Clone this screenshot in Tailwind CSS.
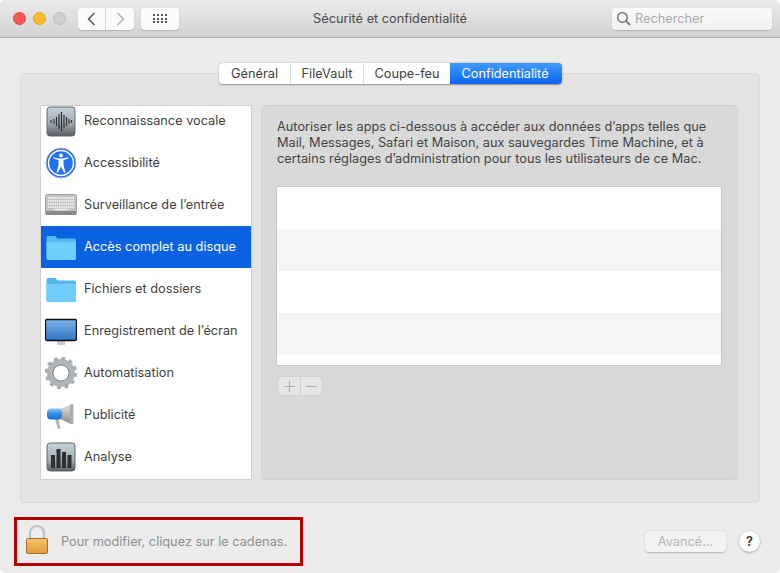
<!DOCTYPE html>
<html lang="fr">
  <head>
    <meta charset="UTF-8" />
    <title>Sécurité et confidentialité</title>
    <script src="https://cdn.jsdelivr.net/npm/@tailwindcss/browser@4"></script>
  </head>
  <body class="bg-white">
    <div class="w-[780px] h-[573px] bg-[#ececec] rounded-[5px] overflow-hidden font-['Inter','Liberation_Sans',sans-serif] text-[12.75px] text-[#3f3f3f]">
      <!-- title bar -->
      <div class="h-[38px] bg-gradient-to-b from-[#ebebeb] to-[#d2d2d2] border-b border-[#b4b4b4] flex items-center pl-[12px] pr-[8px]">
        <div class="flex gap-[7px] w-[66px] shrink-0 pl-[1px]">
          <span class="w-[13px] h-[13px] rounded-full bg-[#fc5753] border border-[#e0443e]"></span>
          <span class="w-[13px] h-[13px] rounded-full bg-[#fdbc2e] border border-[#dea123]"></span>
          <span class="w-[13px] h-[13px] rounded-full bg-[#cfcfcf] border border-[#bdbdbd]"></span>
        </div>
        <div class="flex h-[22px] w-[56px] shrink-0 rounded-[4px] bg-[#fbfbfb] shadow-[0_1px_1px_#b0b0b0]">
          <div class="w-[28px] border-r border-[#d6d6d6] flex items-center justify-center">
            <svg width="9" height="14" viewBox="0 0 9 14" fill="none" stroke="#555" stroke-width="1.5"><path d="M7.5 1 1.5 7l6 6" /></svg>
          </div>
          <div class="w-[28px] flex items-center justify-center">
            <svg width="9" height="14" viewBox="0 0 9 14" fill="none" stroke="#b0b0b0" stroke-width="1.5"><path d="M1.5 1l6 6-6 6" /></svg>
          </div>
        </div>
        <div class="ml-[7px] w-[38px] h-[22px] shrink-0 rounded-[4px] bg-[#fbfbfb] shadow-[0_1px_1px_#b0b0b0] flex items-center justify-center">
          <div class="grid grid-cols-4 gap-x-[2px] gap-y-[1.5px]">
            <i class="w-[2px] h-[2px] bg-[#555]"></i><i class="w-[2px] h-[2px] bg-[#555]"></i><i class="w-[2px] h-[2px] bg-[#555]"></i><i class="w-[2px] h-[2px] bg-[#555]"></i>
            <i class="w-[2px] h-[2px] bg-[#555]"></i><i class="w-[2px] h-[2px] bg-[#555]"></i><i class="w-[2px] h-[2px] bg-[#555]"></i><i class="w-[2px] h-[2px] bg-[#555]"></i>
            <i class="w-[2px] h-[2px] bg-[#555]"></i><i class="w-[2px] h-[2px] bg-[#555]"></i><i class="w-[2px] h-[2px] bg-[#555]"></i><i class="w-[2px] h-[2px] bg-[#555]"></i>
          </div>
        </div>
        <div class="flex-1 text-center text-[#4b4b4b] pr-[11px] pt-[1px]">Sécurité et confidentialité</div>
        <div class="w-[160px] h-[22px] shrink-0 rounded-[4px] bg-gradient-to-b from-[#fbfbfb] to-[#f1f1f1] shadow-[0_1px_1px_#b0b0b0] flex items-center pl-[4px] gap-[4px] text-[#a9a9a9]">
          <svg width="15" height="15" viewBox="0 0 14 14" fill="none" stroke="#666" stroke-width="1.2"><circle cx="6" cy="6" r="4.5" /><path d="M9.3 9.3 13 13" stroke-width="1.5" /></svg>
          <span>Rechercher</span>
        </div>
      </div>

      <!-- main -->
      <div class="px-[20px] pt-[25px]">
        <div class="flex justify-center relative z-10 -mb-[11px] pl-[1px]">
          <div class="flex h-[21px] rounded-[4px] bg-white shadow-[0_0.5px_1.5px_#8e8e8e] overflow-hidden">
            <div class="w-[72px] flex items-center justify-center border-r border-[#dedede]">Général</div>
            <div class="w-[73px] flex items-center justify-center border-r border-[#dedede]">FileVault</div>
            <div class="w-[86px] flex items-center justify-center">Coupe-feu</div>
            <div class="w-[112px] flex items-center justify-center text-white bg-gradient-to-b from-[#3f9bfb] to-[#0f63f5] pr-[2px]">Confidentialité</div>
          </div>
        </div>
        <div class="h-[430px] bg-[#e3e3e3] border border-[#dcdcdc] rounded-[4px] pl-[19px] pr-[21px] pt-[31px] flex gap-[9px]">
          <!-- category list -->
          <div class="w-[212px] h-[375px] bg-white border border-[#cfcfcf] overflow-hidden shrink-0">
            <div class="-mt-[6px]">
              <div class="h-[42px] flex items-center gap-[7px] pl-[4px]">
                <svg class="w-[32px] shrink-0" width="32" height="32" viewBox="0 0 32 32">
                  <defs><linearGradient id="g1" x1="0" y1="0" x2="0" y2="1"><stop offset="0" stop-color="#c4d0d8" /><stop offset="0.55" stop-color="#a4aeb4" /><stop offset="1" stop-color="#555b60" /></linearGradient></defs>
                  <rect x="2" y="2" width="28" height="29" rx="3" fill="url(#g1)" stroke="#5f6a72" />
                  <path d="M6 15v3M9 14v5M11.500 12v9M14 9v15M16.500 7v19M19 10v13M21.500 12v9M24 14v5M26.500 15v3" stroke="#2c2f33" stroke-width="1.200" />
                </svg>
                <span class="pb-[1px]">Reconnaissance vocale</span>
              </div>
              <div class="h-[42px] flex items-center gap-[7px] pl-[4px]">
                <svg class="w-[32px] shrink-0" width="32" height="32" viewBox="0 0 32 32">
                  <circle cx="16" cy="16" r="15" fill="#2c62d6" stroke="#a9bce6" />
                  <circle cx="16" cy="16" r="12.500" fill="#1f72f5" stroke="#fff" stroke-width="1.500" />
                  <circle cx="16" cy="8.500" r="2" fill="#fff" />
                  <path d="M8.500 11.500 13.500 13v5l-2 7.500h1.500l3-6 3 6h1.500l-2-7.500v-5l5-1.500-.5-1.300-5.500 1.300h-4l-5.500-1.300z" fill="#fff" />
                </svg>
                <span class="pb-[1px]">Accessibilité</span>
              </div>
              <div class="h-[42px] flex items-center gap-[7px] pl-[4px]">
                <svg class="w-[32px] shrink-0" width="32" height="32" viewBox="0 0 32 32">
                  <rect x="0.500" y="5.500" width="31" height="20" rx="2" fill="#c4c4c4" stroke="#a0a0a0" />
                  <rect x="0.500" y="22" width="31" height="4" rx="1.500" fill="#8a8a8a" />
                  <path d="M3 9h26M3 12h26M3 15h26M3 18h26" stroke="#eeeeee" stroke-width="2" stroke-dasharray="1.500 .7" />
                  <path d="M9 20.500h14" stroke="#eeeeee" stroke-width="1.500" />
                </svg>
                <span class="pb-[1px]">Surveillance de l’entrée</span>
              </div>
              <div class="h-[42px] flex items-center gap-[7px] pl-[4px] bg-[#0b62e0] text-white">
                <svg class="w-[32px] shrink-0" width="32" height="32" viewBox="0 0 32 32">
                  <path d="M1.500 6.500Q1.500 5 3 5h7.500l2 2.500H29Q31 7.500 31 9.500V27q0 2-2 2H3.500q-2 0-2-2z" fill="#53b6f0" />
                  <path d="M1.500 11h29.500v16q0 2-2 2H3.500q-2 0-2-2z" fill="#6fcefc" />
                </svg>
                <span class="pb-[1px]">Accès complet au disque</span>
              </div>
              <div class="h-[42px] flex items-center gap-[7px] pl-[4px]">
                <svg class="w-[32px] shrink-0" width="32" height="32" viewBox="0 0 32 32">
                  <path d="M1.500 6.500Q1.500 5 3 5h7.500l2 2.500H29Q31 7.500 31 9.500V27q0 2-2 2H3.500q-2 0-2-2z" fill="#53b6f0" />
                  <path d="M1.500 11h29.500v16q0 2-2 2H3.500q-2 0-2-2z" fill="#6fcefc" />
                </svg>
                <span class="pb-[1px]">Fichiers et dossiers</span>
              </div>
              <div class="h-[42px] flex items-center gap-[7px] pl-[4px]">
                <svg class="w-[32px] shrink-0" width="32" height="32" viewBox="0 0 32 32">
                  <defs><linearGradient id="g2" x1="0" y1="0" x2="0" y2="1"><stop offset="0" stop-color="#79b4e8" /><stop offset="1" stop-color="#3474c4" /></linearGradient></defs>
                  <rect x="12" y="25" width="8" height="5" fill="#c9c9c9" />
                  <rect x="0.500" y="4.500" width="31" height="21" rx="1.500" fill="url(#g2)" stroke="#111" stroke-width="1.300" />
                </svg>
                <span class="pb-[1px]">Enregistrement de l’écran</span>
              </div>
              <div class="h-[42px] flex items-center gap-[7px] pl-[4px]">
                <svg class="w-[32px] shrink-0" width="32" height="32" viewBox="0 0 32 32">
                  <circle cx="16" cy="16" r="11" fill="none" stroke="#b0b5ba" stroke-width="6" />
                  <circle cx="16" cy="16" r="14.500" fill="none" stroke="#a8adb2" stroke-width="3.500" stroke-dasharray="3.800 3.790" />
                  <circle cx="16" cy="16" r="8" fill="none" stroke="#80858a" stroke-width="1" />
                </svg>
                <span class="pb-[1px]">Automatisation</span>
              </div>
              <div class="h-[42px] flex items-center gap-[7px] pl-[4px]">
                <svg class="w-[32px] shrink-0" width="32" height="32" viewBox="0 0 32 32">
                  <defs>
                    <linearGradient id="g3" x1="0" y1="0" x2="0" y2="1"><stop offset="0" stop-color="#e2e2e2" /><stop offset="1" stop-color="#8f8f8f" /></linearGradient>
                    <linearGradient id="g6" x1="0" y1="0" x2="0" y2="1"><stop offset="0" stop-color="#8cc6f7" /><stop offset="0.5" stop-color="#2f8de8" /><stop offset="1" stop-color="#1f6fc8" /></linearGradient>
                  </defs>
                  <path d="M10 20l3 10h2.500l-2-10z" fill="#b5b5b5" />
                  <path d="M15 10 26 5v20l-11-5z" fill="url(#g3)" />
                  <rect x="25" y="5" width="3.500" height="20" rx="1.500" fill="#adadad" />
                  <rect x="2" y="9.500" width="15" height="11" rx="4" fill="url(#g6)" />
                </svg>
                <span class="pb-[1px]">Publicité</span>
              </div>
              <div class="h-[42px] flex items-center gap-[7px] pl-[4px]">
                <svg class="w-[32px] shrink-0" width="32" height="32" viewBox="0 0 32 32">
                  <defs><linearGradient id="g4" x1="0" y1="0" x2="0" y2="1"><stop offset="0" stop-color="#c5d3da" /><stop offset="0.6" stop-color="#a3b0b6" /><stop offset="1" stop-color="#595e62" /></linearGradient></defs>
                  <rect x="2" y="2" width="28" height="28" rx="3" fill="url(#g4)" stroke="#5f6a72" />
                  <path d="M6 14h4v13H6zM11.500 8h4v19h-4zM17 11h4v16h-4zM22.500 14h4v13h-4z" fill="#2f2f2f" />
                </svg>
                <span class="pb-[1px]">Analyse</span>
              </div>
            </div>
          </div>

          <!-- details -->
          <div class="flex-1 h-[375px] bg-[#d9d9d9] border border-[#d2d2d2] rounded-[4px] pl-[14px] pr-[15px] pt-[13px]">
            <p class="ml-[1px] leading-[16px] text-[#444] whitespace-nowrap">Autoriser les apps ci-dessous à accéder aux données d’apps telles que<br />Mail, Messages, Safari et Maison, aux sauvegardes Time Machine, et à<br />certains réglages d’administration pour tous les utilisateurs de ce Mac.</p>
            <div class="mt-[19px] w-[446px] h-[180px] bg-white border border-[#c8c8c8] overflow-hidden">
              <div class="h-[42px] bg-white"></div>
              <div class="h-[42px] bg-[#f4f5f5]"></div>
              <div class="h-[42px] bg-white"></div>
              <div class="h-[42px] bg-[#f4f5f5]"></div>
            </div>
            <div class="mt-[10px] ml-[1px] flex w-[46px] h-[20px] rounded-[4px] bg-[#e6e6e6] border border-[#d0d0d0] text-[#b5b5b5]">
              <div class="w-[23px] border-r border-[#d0d0d0] flex items-center justify-center">
                <svg width="11" height="11" viewBox="0 0 11 11" stroke="#b0b0b0" stroke-width="1.200"><path d="M5.500 0v11M0 5.500h11" /></svg>
              </div>
              <div class="flex-1 flex items-center justify-center">
                <svg width="11" height="11" viewBox="0 0 11 11" stroke="#b0b0b0" stroke-width="1.200"><path d="M0 5.500h11" /></svg>
              </div>
            </div>
          </div>
        </div>
      </div>

      <!-- footer -->
      <div class="mt-[14px] pl-[14px] pr-[20px] flex items-center">
        <div class="w-[289px] h-[49px] border-[3px] border-[#b80000] flex items-center pl-[8px] gap-[12px] text-[#8e8e8e]">
          <svg width="24" height="30" viewBox="0 0 24 30" class="shrink-0 -mt-[5px]">
            <defs><linearGradient id="g5" x1="0" y1="0" x2="0" y2="1"><stop offset="0" stop-color="#f6c26a" /><stop offset="1" stop-color="#e39a3c" /></linearGradient></defs>
            <path d="M5 15V9a7 7 0 0 1 14 0v6" fill="none" stroke="#b9c3cc" stroke-width="2.200" />
            <rect x="1.500" y="14.500" width="21" height="15" rx="1.500" fill="url(#g5)" stroke="#ad6f2b" />
          </svg>
          <span class="pt-[1px]">Pour modifier, cliquez sur le cadenas.</span>
        </div>
        <div class="ml-auto w-[81px] h-[21px] rounded-[4px] bg-[#f3f3f3] shadow-[0_0.5px_1.5px_#b5b5b5] flex items-center justify-center text-[#b4b4b4]">Avancé...</div>
        <div class="ml-[13px] w-[21px] h-[21px] rounded-full bg-[#fdfdfd] shadow-[0_0.5px_2px_#8f8f8f] flex items-center justify-center text-[#333] font-semibold">?</div>
      </div>
    </div>
  </body>
</html>
